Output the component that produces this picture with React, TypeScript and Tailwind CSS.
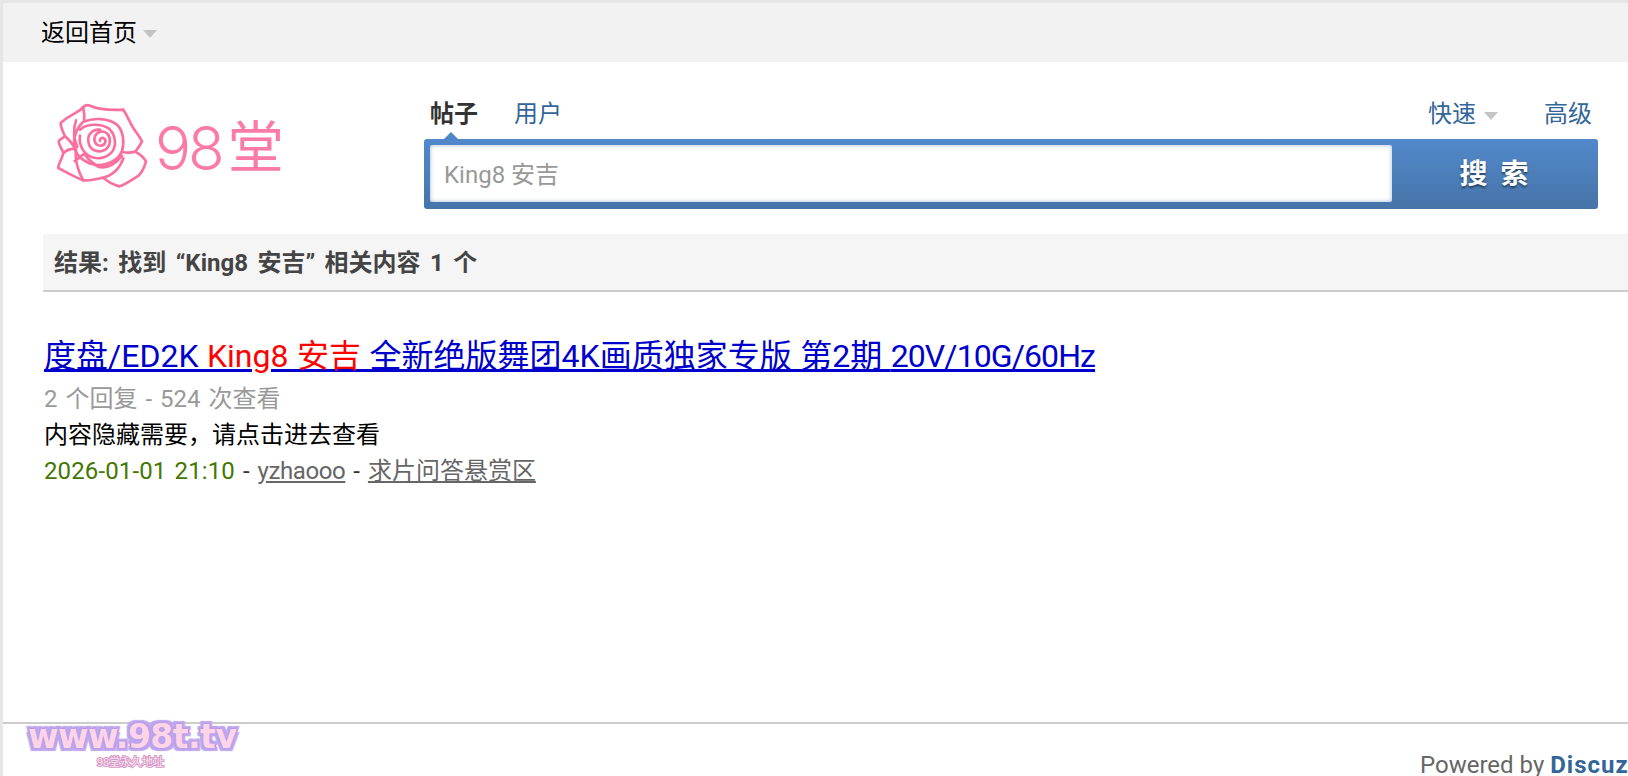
import React from 'react';

function Caret({ className }: { className: string }) {
  return <span className={`inline-block w-0 h-0 border-x-[7px] border-x-transparent border-t-[8px] border-t-[#c4c4c4] ${className}`} />;
}

function RoseLogo() {
  return (
    <svg className="w-[94px] h-[86px] shrink-0" viewBox="45 40 282 258" fill="none" stroke="#fb6f9f" strokeWidth="8" strokeLinecap="round" strokeLinejoin="round">
      <path d="M62 100C80 82 105 72 122 60C130 50 140 43 150 48C172 58 210 62 250 60C262 78 268 95 278 112C288 128 300 142 306 155C300 168 292 178 286 186C300 194 312 204 318 216C312 236 304 250 296 258C278 268 258 284 238 290C222 286 204 276 190 264C170 268 150 274 130 272C104 262 80 248 55 235C52 228 66 210 70 190C66 176 56 166 56 155C60 148 68 146 75 140C70 128 62 114 62 100Z" />
      <path d="M130 56C134 72 134 84 132 96M130 96C160 84 206 84 232 106C250 124 254 160 246 184C236 210 204 228 170 226C140 222 112 204 104 176C98 148 108 116 130 96Z" />
      <path d="M108 92C100 116 100 148 112 172M75 140C88 150 98 164 106 178M70 190C84 178 94 176 106 178" />
      <path d="M120 120C140 102 180 100 206 116C226 134 230 164 218 184C204 204 174 212 150 200C128 188 116 164 120 138" />
      <path d="M180 120C156 118 140 136 146 160C150 182 176 192 196 180C212 168 214 146 202 132C190 120 170 126 164 142C160 156 170 170 184 168C196 166 200 152 192 146C186 142 178 148 180 154" />
      <path d="M132 192C144 208 158 222 176 232C200 236 226 224 246 198M286 186C270 190 258 190 246 186M104 214C118 206 124 200 132 192M108 180C104 212 116 250 130 272M190 264C220 256 240 234 250 206" />
    </svg>
  );
}

export default function App() {
  return (
    <div className="w-[1628px] h-[776px] overflow-hidden relative bg-white border-l-[3px] border-t-[3px] border-[#e6e6e6] font-['Roboto','Noto_Sans_CJK_SC',sans-serif] text-[24px] text-black">
      <div className="h-[59px] bg-[#f2f2f2] flex items-center pl-[38px]">
        <span className="leading-none">返回首页</span>
        <Caret className="ml-[6px] mt-[3px]" />
      </div>

      <div className="h-[172px] flex">
        <div className="w-[421px] pl-[52px] pt-[41px] flex items-start">
          <RoseLogo />
          <span className="ml-[6px] mt-[13px] text-[#fb7aa8] font-['Inter',sans-serif] font-light text-[60px] leading-[64px] tracking-[-3px]">98</span>
          <span className="ml-[6px] mt-[10px] text-[#fb7aa8] font-['Noto_Sans_CJK_SC',sans-serif] font-normal text-[56px] leading-[60px]">堂</span>
        </div>

        <div className="w-[1174px] pt-[29px]">
          <div className="h-[48px] pb-[2px] flex items-center text-[#336699] leading-none">
            <div className="relative ml-[6px] font-bold text-[#333]">
              帖子
              <span className="absolute left-[13px] top-[30px] w-0 h-0 border-x-[8px] border-x-transparent border-b-[8px] border-b-[#5086c6]" />
            </div>
            <span className="ml-[36px]">用户</span>
            <span className="ml-auto">快速</span>
            <Caret className="ml-[8px] mt-[3px]" />
            <span className="ml-[46px] mr-[6px]">高级</span>
          </div>
          <div className="h-[70px] flex rounded-[3px] bg-gradient-to-b from-[#5289cb] to-[#4674a8] p-[6px] pr-0">
            <div className="w-[962px] h-[57px] bg-white rounded-[2px] flex items-center pl-[14px] pt-[2px] text-[#999] shadow-[inset_0_0_4px_rgba(70,110,170,0.5)]">
              King8 安吉
            </div>
            <div className="flex-1 flex items-center justify-center pt-[2px] pr-[2px] text-white font-bold text-[28px] [word-spacing:6px] [text-shadow:0_2px_2px_rgba(0,0,0,0.45)]">
              搜 索
            </div>
          </div>
        </div>
      </div>

      <div className="ml-[40px] h-[58px] bg-[#f5f5f5] border-b-2 border-[#cccccc] flex items-center pl-[11px] pt-[1px] font-bold text-[#444] whitespace-nowrap [word-spacing:3.5px]">
        结果: 找到 “King8 安吉” 相关内容 1 个
      </div>

      <div className="ml-[41px] mt-[44px] whitespace-nowrap">
        <a className="block text-[32px] leading-[40px] text-[#0000cc] underline [word-spacing:0.6px]">
          度盘/ED2K <em className="not-italic text-[#ff0000]">King8 安吉</em> 全新绝版舞团4K画质独家专版 第2期 <span className="tracking-[-0.9px]">20V/10G/60Hz</span>
        </a>
        <p className="mt-[5px] leading-[36px] text-[#999] [word-spacing:2px]">2 个回复 - 524 次查看</p>
        <p className="leading-[36px]">内容隐藏需要，请点击进去查看</p>
        <p className="leading-[36px] text-[#333] [word-spacing:2px]">
          <span className="text-[#447700] tracking-[0.13px]">2026-01-01 21:10</span> - <a className="text-[#666] underline tracking-[-0.4px]">yzhaooo</a> - <a className="text-[#666] underline">求片问答悬赏区</a>
        </p>
      </div>

      <div className="absolute left-0 right-0 top-[719px] border-t-2 border-[#cccccc] pt-[24px] whitespace-nowrap text-[#666] leading-[34px]">
        <div className="ml-[1417px] w-fit">
          Powered by <strong className="text-[#336699] tracking-[1px]">Discuz!</strong>
        </div>
      </div>

      <div className="absolute left-[25px] top-[716px] w-[205px] text-center">
        <div className="font-['DejaVu_Sans',sans-serif] font-bold text-[33px] leading-[36px] text-[#ffd4e7] tracking-[-0.5px] [-webkit-text-stroke:3px_#de6fae] [paint-order:stroke_fill] [text-shadow:0_0_2px_#a992e6,3px_3px_1px_#bda6ee,-3px_-3px_1px_#bda6ee,3px_-3px_1px_#bda6ee,-3px_3px_1px_#bda6ee]">
          www.98t.tv
        </div>
        <div className="font-['Noto_Sans_CJK_SC',sans-serif] text-[11px] leading-[12px] text-[#fbe3ef] [-webkit-text-stroke:2px_#d79ac8] [paint-order:stroke_fill]">
          98堂永久地址
        </div>
      </div>
    </div>
  );
}
